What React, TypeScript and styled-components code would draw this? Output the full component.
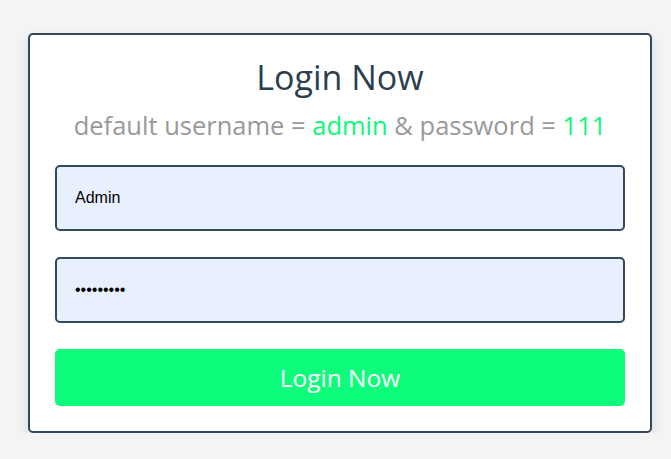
import React, { useState } from 'react';
import styled, { createGlobalStyle } from 'styled-components';

const GlobalStyle = createGlobalStyle`
    body {
        margin: 0;
        background: #f4f4f4;
        font-family: "Open Sans", "Liberation Sans", sans-serif;
    }
`;

const Page = styled.div`
    padding: 33px 0 0 28px;
`;

const Card = styled.form`
    width: 624px;
    box-sizing: border-box;
    padding: 20px 25px 25px;
    background: #fff;
    border: 2px solid #34495e;
    border-radius: 5px;
    box-shadow: 0 6px 14px rgba(0, 0, 0, 0.12);
`;

const Title = styled.h2`
    margin: 0;
    text-align: center;
    font-size: 34px;
    font-weight: 400;
    line-height: 44px;
    color: #2c3e50;
`;

const Hint = styled.p`
    margin: 10px 0 24px;
    text-align: center;
    font-size: 25.5px;
    line-height: 32px;
    color: #999;
`;

const Accent = styled.span`
    color: #0ef87a;
`;

const Field = styled.input`
    display: block;
    width: 100%;
    height: 66px;
    box-sizing: border-box;
    margin-bottom: 26px;
    padding: 0 18px;
    background: #e8f0fe;
    border: 2px solid #34495e;
    border-radius: 5px;
    font-family: Arial, "Liberation Sans", sans-serif;
    font-size: 16px;
    color: #000;
    outline: none;
`;

const Submit = styled.button`
    display: block;
    width: 100%;
    height: 57px;
    border: none;
    border-radius: 5px;
    background: #0dfc7c;
    color: #fff;
    font-family: inherit;
    font-size: 24.5px;
    cursor: pointer;
`;

export const LoginForm = () => {
    const [username, setUsername] = useState('Admin');
    const [password, setPassword] = useState('111111111');

    return (
        <Card onSubmit={(e) => e.preventDefault()}>
            <Title>Login Now</Title>
            <Hint>
                default username = <Accent>admin</Accent> &amp; password = <Accent>111</Accent>
            </Hint>
            <Field type="text" value={username} onChange={(e) => setUsername(e.target.value)} />
            <Field type="password" value={password} onChange={(e) => setPassword(e.target.value)} />
            <Submit type="submit">Login Now</Submit>
        </Card>
    );
};

const App = () => (
    <>
        <GlobalStyle />
        <Page>
            <LoginForm />
        </Page>
    </>
);

export default App;
